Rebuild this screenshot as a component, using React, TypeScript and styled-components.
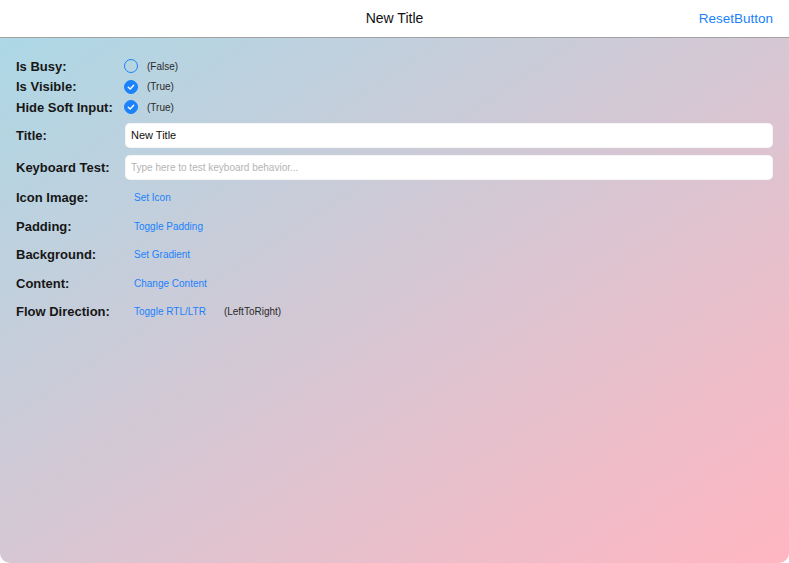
import React from 'react';
import styled, { createGlobalStyle } from 'styled-components';

const GlobalStyle = createGlobalStyle`
  html, body {
    margin: 0;
    padding: 0;
    background: #ffffff;
  }
  body {
    font-family: "Liberation Sans", Arial, sans-serif;
  }
`;

const Window = styled.div`
  width: 789px;
  height: 563px;
  display: flex;
  flex-direction: column;
  border-radius: 0 0 10px 10px;
  overflow: hidden;
  box-sizing: border-box;
`;

const NavBar = styled.header`
  height: 37px;
  flex: none;
  display: grid;
  grid-template-columns: 1fr auto 1fr;
  align-items: center;
  background: #ffffff;
  border-bottom: 1px solid #a3a3a3;
  padding: 0 16px;
`;

const NavTitle = styled.div`
  grid-column: 2;
  font-size: 14px;
  color: #111;
  padding-bottom: 1px;
`;

const NavAction = styled.button`
  grid-column: 3;
  justify-self: end;
  background: none;
  border: none;
  padding: 0;
  font-family: inherit;
  font-size: 13.5px;
  color: #1a82fb;
  cursor: pointer;
`;

const Content = styled.main`
  flex: 1;
  background: linear-gradient(to bottom right, #add8e6, #ffb6c1);
  padding: 18px 16px 0;
  display: flex;
  flex-direction: column;
`;

type RowKind = 'check' | 'input' | 'button';

const rowHeight: Record<RowKind, string> = {
  check: '20.5px',
  input: '25px',
  button: '28.5px',
};

const Row = styled.div<{ $kind: RowKind; $gap?: number }>`
  display: grid;
  grid-template-columns: 109px 1fr;
  align-items: center;
  height: ${(p) => rowHeight[p.$kind]};
  margin-top: ${(p) => p.$gap ?? 0}px;
`;

const Label = styled.span`
  font-size: 13px;
  font-weight: bold;
  color: #161616;
  white-space: nowrap;
`;

const Value = styled.div`
  display: flex;
  align-items: center;
`;

const Circle = styled.span<{ $on: boolean }>`
  width: 14px;
  height: 14px;
  box-sizing: border-box;
  border-radius: 50%;
  border: 1.5px solid #1a82fb;
  background: ${(p) => (p.$on ? '#1a82fb' : 'transparent')};
  display: flex;
  align-items: center;
  justify-content: center;
  margin-left: -1px;
`;

const Note = styled.span<{ $left: number }>`
  font-size: 10px;
  color: #2a2a2a;
  margin-left: ${(p) => p.$left}px;
`;

const Field = styled.input`
  width: 100%;
  height: 25px;
  box-sizing: border-box;
  border: 1px solid rgba(0, 0, 0, 0.04);
  border-radius: 5px;
  background: #ffffff;
  padding: 0 5px;
  font-family: inherit;
  font-size: 11px;
  color: #111;
  outline: none;

  &::placeholder {
    font-size: 10px;
    color: #b4b4b4;
  }
`;

const LinkButton = styled.button`
  background: none;
  border: none;
  padding: 0 0 0 9px;
  font-family: inherit;
  font-size: 10px;
  color: #1a82fb;
  cursor: pointer;
`;

function Check({ on }: { on: boolean }) {
  return (
    <Circle $on={on}>
      {on && (
        <svg width="8" height="8" viewBox="0 0 8 8">
          <path d="M1.3 4.2 L3.2 6 L6.7 2.2" fill="none" stroke="#fff" strokeWidth="1.4" strokeLinecap="round" strokeLinejoin="round" />
        </svg>
      )}
    </Circle>
  );
}

const checks = [
  { label: 'Is Busy:', on: false },
  { label: 'Is Visible:', on: true },
  { label: 'Hide Soft Input:', on: true },
];

const actions = [
  { label: 'Icon Image:', text: 'Set Icon' },
  { label: 'Padding:', text: 'Toggle Padding' },
  { label: 'Background:', text: 'Set Gradient' },
  { label: 'Content:', text: 'Change Content' },
  { label: 'Flow Direction:', text: 'Toggle RTL/LTR', note: '(LeftToRight)' },
];

export default function App() {
  return (
    <>
      <GlobalStyle />
      <Window>
        <NavBar>
          <NavTitle>New Title</NavTitle>
          <NavAction>ResetButton</NavAction>
        </NavBar>
        <Content>
          {checks.map((c) => (
            <Row key={c.label} $kind="check">
              <Label>{c.label}</Label>
              <Value>
                <Check on={c.on} />
                <Note $left={9}>{c.on ? '(True)' : '(False)'}</Note>
              </Value>
            </Row>
          ))}
          <Row $kind="input" $gap={5}>
            <Label>Title:</Label>
            <Field defaultValue="New Title" />
          </Row>
          <Row $kind="input" $gap={7}>
            <Label>Keyboard Test:</Label>
            <Field placeholder="Type here to test keyboard behavior..." />
          </Row>
          {actions.map((a, i) => (
            <Row key={a.label} $kind="button" $gap={i === 0 ? 4 : 0}>
              <Label>{a.label}</Label>
              <Value>
                <LinkButton>{a.text}</LinkButton>
                {a.note && <Note $left={18}>{a.note}</Note>}
              </Value>
            </Row>
          ))}
        </Content>
      </Window>
    </>
  );
}
